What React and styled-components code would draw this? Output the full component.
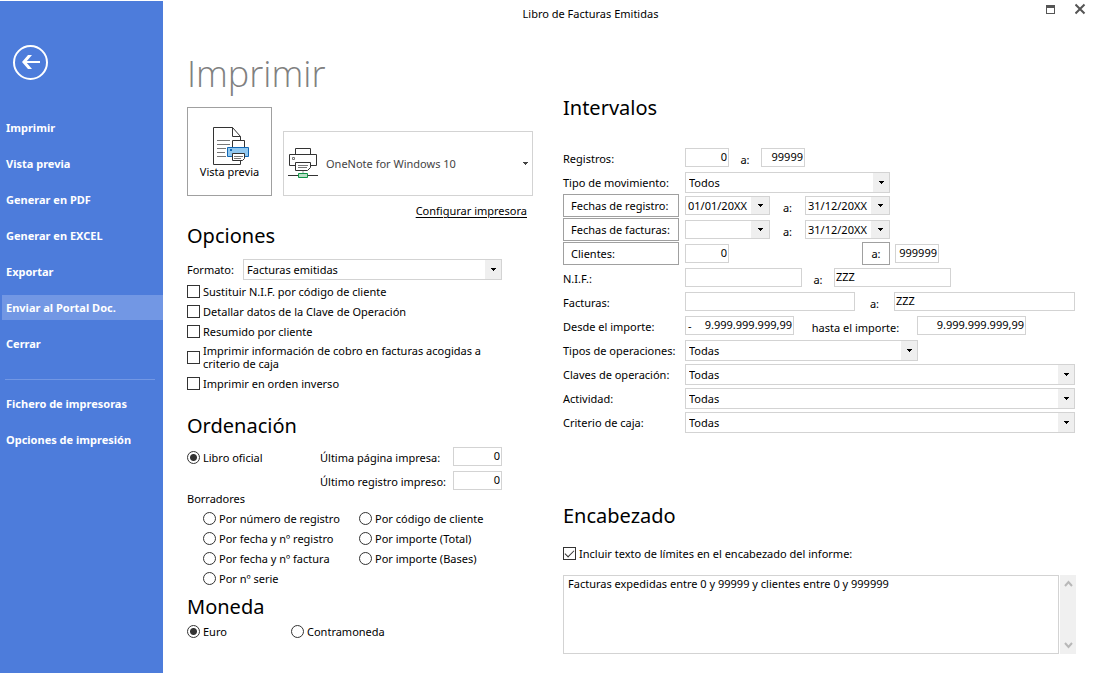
import React from "react";
import styled, { createGlobalStyle, css } from "styled-components";

const GlobalStyle = createGlobalStyle`
  *, *::before, *::after { box-sizing: border-box; }
  body { margin: 0; background: #fff; }
  body, button, input, select, textarea {
    font-family: "Noto Sans", "Open Sans", sans-serif;
    font-size: 11px;
    line-height: 13px;
    color: #000;
  }
`;

const Screen = styled.div`
  display: flex;
  min-height: 100vh;
`;

const Sidebar = styled.nav`
  flex: 0 0 163px;
  padding-top: 44px;
  border-top: 1px solid #fff;
  background: #4d7cdb;
`;

const BackButton = styled.button`
  display: block;
  width: 36px;
  height: 36px;
  margin: 0 0 34px 13px;
  padding: 0;
  border: 0;
  background: none;
  svg { display: block; }
`;

const NavList = styled.div`
  display: flex;
  flex-direction: column;
  gap: 11px;
`;

const NavItem = styled.button`
  height: 25px;
  padding: 0 0 0 4px;
  margin-left: 2px;
  border: 0;
  background: ${(p) => (p.$active ? "#7297e4" : "transparent")};
  color: #fff;
  font-weight: 700;
  text-align: left;
`;

const NavDivider = styled.hr`
  height: 1px;
  margin: 12px 8px 0 5px;
  border: 0;
  background: #7297e4;
`;

const Main = styled.main`
  flex: 1;
  min-width: 0;
`;

const TitleBar = styled.header`
  display: flex;
  align-items: center;
  height: 26px;
`;

const WindowTitle = styled.div`
  flex: 1;
  text-align: center;
`;

const WindowButtons = styled.div`
  display: flex;
  align-self: flex-start;
  gap: 18px;
  width: 76px;
  height: 20px;
  padding-left: 27px;
`;

const WindowButton = styled.button`
  width: 12px;
  height: 20px;
  padding: 0;
  border: 0;
  background: none;
  svg { display: block; }
`;

const Columns = styled.div`
  display: grid;
  grid-template-columns: 346px minmax(0, 1fr);
  column-gap: 30px;
  padding: 0 18px 0 24px;
`;

const PageTitle = styled.h1`
  height: 56px;
  margin: 22px 0 3px;
  color: #808080;
  font-family: "Open Sans", "Noto Sans", sans-serif;
  font-size: 36px;
  font-weight: 350;
  line-height: 52px;
`;

const SectionTitle = styled.h2`
  height: 28px;
  margin: 0;
  font-size: 20px;
  font-weight: 400;
  line-height: 28px;
`;

const PrinterRow = styled.div`
  display: flex;
  align-items: flex-end;
  gap: 11px;
`;

const PreviewButton = styled.button`
  display: flex;
  flex-direction: column;
  align-items: center;
  width: 85px;
  height: 89px;
  padding: 19px 0 0;
  border: 1px solid #a0a0a0;
  background: #fff;
`;

const PrinterPicker = styled.button`
  display: flex;
  flex: 1;
  align-items: center;
  height: 65px;
  padding: 0 4px;
  border: 1px solid #d3d3d3;
  background: #fff;
  color: #444;
  text-align: left;
`;

const PrinterName = styled.span`
  flex: 1;
  padding-left: 8px;
`;

const ConfigureLink = styled.a`
  display: block;
  margin: 6px 6px 0 0;
  color: #000;
  line-height: 18px;
  text-align: right;
  text-underline-offset: 2px;
`;

const Section = styled.section`
  margin-top: ${(p) => p.$top || 0}px;
`;

const FormatRow = styled.div`
  display: grid;
  grid-template-columns: 56px 259px;
  align-items: center;
  height: 21px;
  margin: 9px 0 1px;
`;

const SelectFrame = styled.span`
  position: relative;
  display: block;
  width: ${(p) => (p.$width ? `${p.$width}px` : "100%")};
  height: 21px;
`;

const NativeSelect = styled.select`
  width: 100%;
  height: 100%;
  padding: 0 20px 0 3px;
  border: 1px solid #d3d3d3;
  border-radius: 0;
  background: #fff;
  appearance: none;
`;

const ArrowCell = styled.span`
  position: absolute;
  top: 1px;
  right: 1px;
  bottom: 1px;
  display: flex;
  align-items: center;
  justify-content: center;
  width: 16px;
  background: #efefef;
  pointer-events: none;
`;

const Options = styled.div`
  display: grid;
  grid-template-columns: ${(p) => p.$columns || "1fr"};
  grid-auto-rows: minmax(20px, auto);
  padding-left: ${(p) => p.$indent || 0}px;
`;

const OptionLabel = styled.label`
  display: flex;
  align-items: center;
  gap: 3px;
  min-height: 20px;
  padding: ${(p) => (p.$tall ? "3px 30px 3px 0" : 0)};
`;

const mark = css`
  flex: none;
  width: 13px;
  height: 13px;
  margin: 0;
  border: 1px solid #333;
  background: #fff;
  appearance: none;
`;

const Checkbox = styled.input.attrs({ type: "checkbox" })`
  ${mark}
  &:checked::before {
    content: "";
    display: block;
    width: 9px;
    height: 5px;
    margin: 2px 0 0 1px;
    border: solid #333;
    border-width: 0 0 1px 1px;
    transform: rotate(-45deg);
  }
`;

const Radio = styled.input.attrs({ type: "radio" })`
  ${mark}
  border-radius: 50%;
  &:checked {
    background: radial-gradient(circle, #333 0 3px, #fff 4px);
  }
`;

const OfficialGrid = styled.div`
  display: grid;
  grid-template-columns: 133px 133px 49px;
  grid-auto-rows: 24px;
  align-items: center;
  margin-top: 5px;
`;

const Caption = styled.div`
  height: 15px;
  line-height: 11px;
`;

const Field = styled.input`
  flex: ${(p) => (p.$width ? "none" : p.$grow || 1)};
  width: ${(p) => (p.$width ? `${p.$width}px` : "auto")};
  min-width: 0;
  height: 19px;
  margin: 0 0 1px;
  padding: 0 1px 2px;
  border: 1px solid #d3d3d3;
  border-radius: 0;
  background: #fff;
  text-align: ${(p) => (p.$number ? "right" : "left")};
`;

const AmountField = styled.span`
  display: flex;
  align-items: center;
  width: 109px;
  height: 19px;
  margin-bottom: 1px;
  padding-left: 2px;
  border: 1px solid #d3d3d3;
  input { height: 17px; margin: 0; border: 0; }
`;

const DateFrame = styled.span`
  display: flex;
  width: 85px;
  height: 19px;
  margin-bottom: 1px;
  border: 1px solid #d3d3d3;
`;

const DateInput = styled.input`
  flex: 1;
  min-width: 0;
  padding: 0 0 1px 2px;
  border: 0;
  background: #fff;
`;

const DateButton = styled.button`
  display: flex;
  align-items: center;
  justify-content: center;
  width: 18px;
  padding: 0;
  border: 0;
  background: #efefef;
`;

const Intervals = styled.div`
  display: grid;
  grid-auto-rows: 24px;
  margin-top: 24px;
`;

const IntervalRow = styled.div`
  display: grid;
  grid-template-columns: 116px minmax(0, 1fr);
  column-gap: 6px;
  align-items: center;
`;

const Controls = styled.div`
  display: flex;
  align-items: center;
  padding-right: 1px;
`;

const Between = styled.label`
  width: ${(p) => p.$width}px;
  padding-top: 2px;
  text-align: center;
`;

const RangeButton = styled.button`
  height: 23px;
  width: ${(p) => (p.$small ? "28px" : "100%")};
  margin: ${(p) => (p.$small ? "0 5px 1px 133px" : "0 0 1px")};
  padding: ${(p) => (p.$small ? 0 : "0 0 0 7px")};
  border: 1px solid #a0a0a0;
  background: #fff;
  text-align: ${(p) => (p.$small ? "center" : "left")};
`;

const HeaderText = styled.div`
  display: flex;
  gap: 1px;
  height: 79px;
  margin-top: 12px;
`;

const TextArea = styled.textarea`
  flex: 1;
  min-width: 0;
  padding: 1px 4px;
  border: 1px solid #d3d3d3;
  border-radius: 0;
  background: #fff;
  resize: none;
`;

const ScrollBar = styled.div`
  display: flex;
  flex-direction: column;
  justify-content: space-between;
  align-items: center;
  width: 16px;
  padding: 5px 0;
  background: #f0f0f0;
`;

const SmallArrow = () => (
  <svg width="5" height="3" viewBox="0 0 5 3" aria-hidden="true" shapeRendering="crispEdges">
    <path d="M0 0h5v1H4v1H3v1H2V2H1V1H0z" fill="currentColor" />
  </svg>
);

const Select = ({ id, value, width, label }) => (
  <SelectFrame $width={width}>
    <NativeSelect id={id} aria-label={label} defaultValue={value}>
      <option>{value}</option>
    </NativeSelect>
    <ArrowCell>
      <SmallArrow />
    </ArrowCell>
  </SelectFrame>
);

const DateField = ({ id, value, label }) => (
  <DateFrame>
    <DateInput id={id} aria-label={label} defaultValue={value} />
    <DateButton type="button" aria-label="Abrir calendario">
      <SmallArrow />
    </DateButton>
  </DateFrame>
);

const Check = ({ children, tall, checked }) => (
  <OptionLabel $tall={tall}>
    <Checkbox defaultChecked={checked} />
    <span>{children}</span>
  </OptionLabel>
);

const RadioOption = ({ children, name, checked }) => (
  <OptionLabel>
    <Radio name={name} defaultChecked={checked} />
    <span>{children}</span>
  </OptionLabel>
);

const Interval = ({ label, id, button, children }) => (
  <IntervalRow>
    {button ? <RangeButton type="button">{label}</RangeButton> : <label htmlFor={id}>{label}</label>}
    <Controls>{children}</Controls>
  </IntervalRow>
);

const BackIcon = () => (
  <svg width="36" height="36" viewBox="0 0 36 36" fill="none" stroke="#fff">
    <circle cx="17.5" cy="17.5" r="16.5" strokeWidth="2" />
    <path d="M11 17h16" strokeWidth="2" />
    <path d="M15 10h4l-6 7 6 7h-4l-6-7z" fill="#fff" stroke="none" />
  </svg>
);

const PreviewIcon = () => (
  <svg width="39" height="38" viewBox="-2 0 39 38" fill="none" stroke="#333">
    <path d="M1.500 .5h19l8 9v28h-27z" fill="#fff" />
    <path d="M20.500 .5v9h8" />
    <path d="M5 13.500h13M5 17.500h13M5 21.500h9M5 25.500h8M5 29.500h9" stroke="#777" />
    <path d="M20.500 21v-7.500h12V21" fill="#fff" />
    <path d="M15.500 20.500h21v9h-21z" fill="#91c8f0" stroke="#1267b4" />
    <path d="M18 22h2v2h-2z" fill="#1267b4" stroke="none" />
    <path d="M20.500 26.500h12v5l-2 2h-10z" fill="#fff" />
    <path d="M22 29.500h9M22 31.500h7" stroke="#777" />
  </svg>
);

const PrinterIcon = () => (
  <svg width="30" height="31" viewBox="0 0 30 31" fill="none" stroke="#333">
    <path d="M7.500 7V.5h15V7" fill="#fff" />
    <path d="M7.500 17.500h-6v-11h27v11h-6" fill="#fff" />
    <path d="M4.500 9.500h2v2h-2z" stroke="#777" />
    <path d="M7.500 14.500h15v5l-3 3h-12z" fill="#fff" />
    <path d="M10 17.500h10M10 19.500h9" stroke="#777" />
    <path d="M15 23v3" stroke="#999" />
    <path d="M0 27.500h30" />
    <path d="M10.500 25.500h9v4h-9z" fill="#b9dfc6" stroke="#119447" />
  </svg>
);

const MaximizeIcon = () => (
  <svg width="12" height="20" viewBox="0 0 12 20" shapeRendering="crispEdges">
    <path d="M1 5h9v9H1zM2 8v5h7V8z" fill="#555" fillRule="evenodd" />
  </svg>
);

const CloseIcon = () => (
  <svg width="12" height="20" viewBox="0 0 12 20">
    <path d="M.5 4.500l9 9M9.500 4.500l-9 9" stroke="#555" strokeWidth="2" />
  </svg>
);

const ScrollChevron = ({ down }) => (
  <svg width="9" height="7" viewBox="0 0 9 7" fill="none" stroke="#b8b8b8" strokeWidth="2">
    <path d={down ? "M1 1l3.500 4L8 1" : "M1 6l3.500-4L8 6"} />
  </svg>
);

const actions = [
  "Imprimir",
  "Vista previa",
  "Generar en PDF",
  "Generar en EXCEL",
  "Exportar",
  "Enviar al Portal Doc.",
  "Cerrar",
];

export default function App() {
  return (
    <>
      <GlobalStyle />
      <Screen>
        <Sidebar>
          <BackButton type="button" aria-label="Volver">
            <BackIcon />
          </BackButton>
          <NavList>
            {actions.map((name) => (
              <NavItem key={name} type="button" $active={name === "Enviar al Portal Doc."}>
                {name}
              </NavItem>
            ))}
            <NavDivider />
            <NavItem type="button">Fichero de impresoras</NavItem>
            <NavItem type="button">Opciones de impresión</NavItem>
          </NavList>
        </Sidebar>

        <Main>
          <TitleBar>
            <WindowTitle>Libro de Facturas Emitidas</WindowTitle>
            <WindowButtons>
              <WindowButton type="button" aria-label="Maximizar">
                <MaximizeIcon />
              </WindowButton>
              <WindowButton type="button" aria-label="Cerrar ventana">
                <CloseIcon />
              </WindowButton>
            </WindowButtons>
          </TitleBar>

          <Columns>
            <div>
              <PageTitle>Imprimir</PageTitle>
              <PrinterRow>
                <PreviewButton type="button">
                  <PreviewIcon />
                  Vista previa
                </PreviewButton>
                <PrinterPicker type="button">
                  <PrinterIcon />
                  <PrinterName>OneNote for Windows 10</PrinterName>
                  <SmallArrow />
                </PrinterPicker>
              </PrinterRow>
              <ConfigureLink href="#configurar">Configurar impresora</ConfigureLink>

              <Section $top={2}>
                <SectionTitle>Opciones</SectionTitle>
                <FormatRow>
                  <label htmlFor="formato">Formato:</label>
                  <Select id="formato" value="Facturas emitidas" />
                </FormatRow>
                <Options>
                  <Check>Sustituir N.I.F. por código de cliente</Check>
                  <Check>Detallar datos de la Clave de Operación</Check>
                  <Check>Resumido por cliente</Check>
                  <Check tall>Imprimir información de cobro en facturas acogidas a criterio de caja</Check>
                  <Check>Imprimir en orden inverso</Check>
                </Options>
              </Section>

              <Section $top={19}>
                <SectionTitle>Ordenación</SectionTitle>
                <OfficialGrid>
                  <RadioOption name="orden" checked>
                    Libro oficial
                  </RadioOption>
                  <label htmlFor="pagina">Última página impresa:</label>
                  <Field id="pagina" $number $width={49} defaultValue="0" />
                  <span />
                  <label htmlFor="registro">Último registro impreso:</label>
                  <Field id="registro" $number $width={49} defaultValue="0" />
                </OfficialGrid>
                <Caption>Borradores</Caption>
                <Options $indent={16} $columns="156px 156px">
                  <RadioOption name="orden">Por número de registro</RadioOption>
                  <RadioOption name="orden">Por código de cliente</RadioOption>
                  <RadioOption name="orden">Por fecha y nº registro</RadioOption>
                  <RadioOption name="orden">Por importe (Total)</RadioOption>
                  <RadioOption name="orden">Por fecha y nº factura</RadioOption>
                  <RadioOption name="orden">Por importe (Bases)</RadioOption>
                  <RadioOption name="orden">Por nº serie</RadioOption>
                </Options>
              </Section>

              <Section $top={5}>
                <SectionTitle>Moneda</SectionTitle>
                <Options $columns="104px 156px">
                  <RadioOption name="moneda" checked>
                    Euro
                  </RadioOption>
                  <RadioOption name="moneda">Contramoneda</RadioOption>
                </Options>
              </Section>
            </div>

            <div>
              <Section $top={68}>
                <SectionTitle>Intervalos</SectionTitle>
                <Intervals>
                  <Interval label="Registros:" id="reg-desde">
                    <Field id="reg-desde" $number $width={44} defaultValue="0" />
                    <Between htmlFor="reg-hasta" $width={32}>a:</Between>
                    <Field id="reg-hasta" $number $width={44} defaultValue="99999" />
                  </Interval>
                  <Interval label="Tipo de movimiento:" id="movimiento">
                    <Select id="movimiento" value="Todos" width={205} />
                  </Interval>
                  <Interval label="Fechas de registro:" button>
                    <DateField label="Fecha de registro inicial" value="01/01/20XX" />
                    <Between htmlFor="fr-hasta" $width={35}>a:</Between>
                    <DateField id="fr-hasta" value="31/12/20XX" />
                  </Interval>
                  <Interval label="Fechas de facturas:" button>
                    <DateField label="Fecha de factura inicial" value="" />
                    <Between htmlFor="ff-hasta" $width={35}>a:</Between>
                    <DateField id="ff-hasta" value="31/12/20XX" />
                  </Interval>
                  <Interval label="Clientes:" button>
                    <Field aria-label="Cliente inicial" $number $width={44} defaultValue="0" />
                    <RangeButton type="button" $small>a:</RangeButton>
                    <Field aria-label="Cliente final" $number $width={44} defaultValue="999999" />
                  </Interval>
                  <Interval label="N.I.F.:" id="nif-desde">
                    <Field id="nif-desde" $width={117} />
                    <Between htmlFor="nif-hasta" $width={32}>a:</Between>
                    <Field id="nif-hasta" $width={117} defaultValue="ZZZ" />
                  </Interval>
                  <Interval label="Facturas:" id="fac-desde">
                    <Field id="fac-desde" $width={170} />
                    <Between htmlFor="fac-hasta" $width={39}>a:</Between>
                    <Field id="fac-hasta" defaultValue="ZZZ" />
                  </Interval>
                  <Interval label="Desde el importe:" id="imp-desde">
                    <AmountField>
                      <span>-</span>
                      <Field id="imp-desde" $number defaultValue="9.999.999.999,99" />
                    </AmountField>
                    <Between htmlFor="imp-hasta" $width={123}>hasta el importe:</Between>
                    <Field id="imp-hasta" $number $width={109} defaultValue="9.999.999.999,99" />
                  </Interval>
                  <Interval label="Tipos de operaciones:" id="tipos">
                    <Select id="tipos" value="Todas" width={233} />
                  </Interval>
                  <Interval label="Claves de operación:" id="claves">
                    <Select id="claves" value="Todas" />
                  </Interval>
                  <Interval label="Actividad:" id="actividad">
                    <Select id="actividad" value="Todas" />
                  </Interval>
                  <Interval label="Criterio de caja:" id="criterio">
                    <Select id="criterio" value="Todas" />
                  </Interval>
                </Intervals>
              </Section>

              <Section $top={68}>
                <SectionTitle>Encabezado</SectionTitle>
                <Section $top={13}>
                  <Check checked>Incluir texto de límites en el encabezado del informe:</Check>
                </Section>
                <HeaderText>
                  <TextArea
                    aria-label="Texto del encabezado"
                    defaultValue="Facturas expedidas entre 0 y 99999 y clientes entre 0 y 999999"
                  />
                  <ScrollBar>
                    <ScrollChevron />
                    <ScrollChevron down />
                  </ScrollBar>
                </HeaderText>
              </Section>
            </div>
          </Columns>
        </Main>
      </Screen>
    </>
  );
}
